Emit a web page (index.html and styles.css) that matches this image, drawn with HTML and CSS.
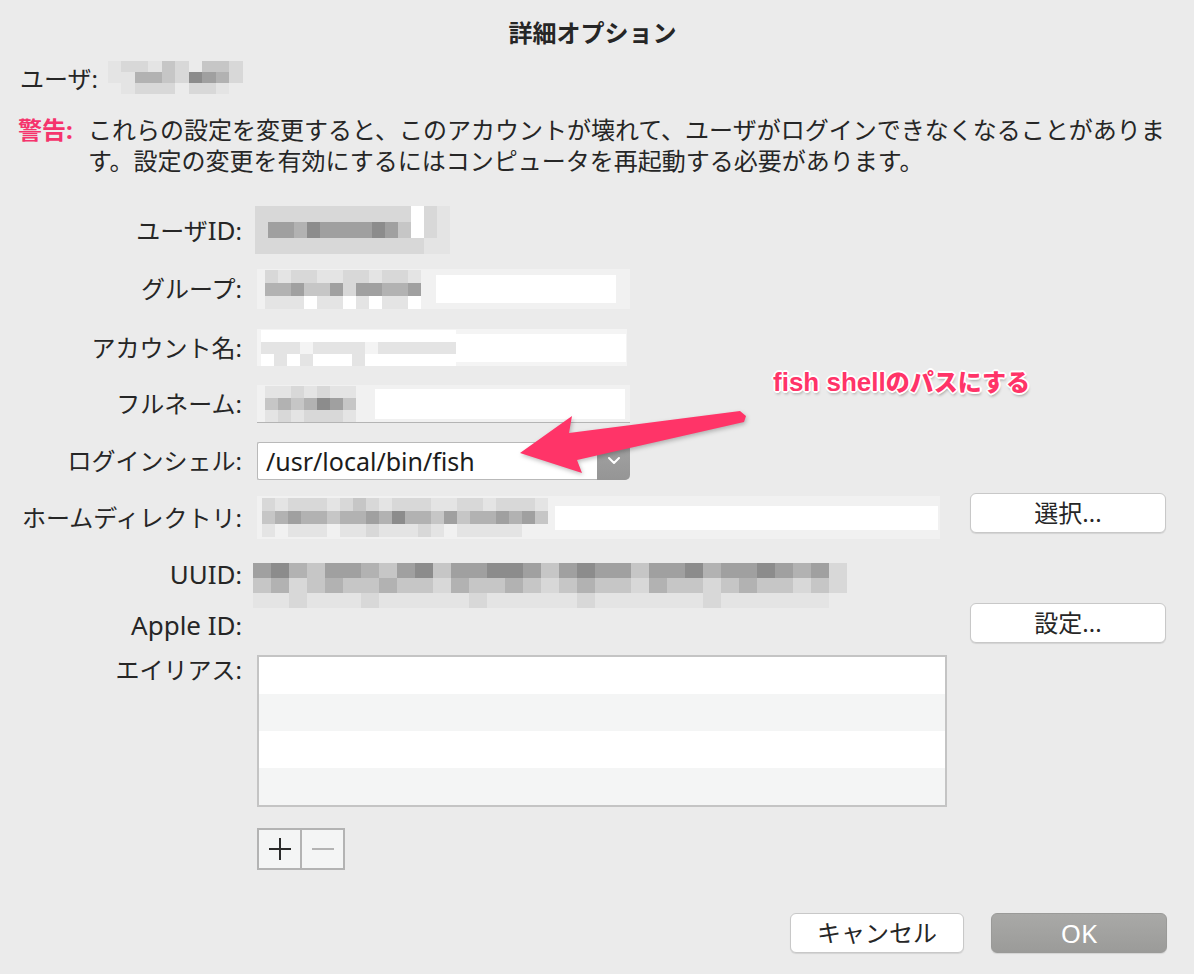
FILE: index.html
```html
<!DOCTYPE html>
<html lang="ja">
<head>
<meta charset="utf-8">
<title>詳細オプション</title>
<link rel="stylesheet" href="styles.css">
</head>
<body>
<div class="dialog">
  <h1 class="title">詳細オプション</h1>

  <div class="user-row">
    <span class="user-label">ユーザ:</span>
    <div class="mosaic m-user">
      <i class="l0"></i><i class="l1"></i><i class="l1"></i><i class="l0"></i><i class="l2"></i><i class="l1"></i><i class="e"></i><i class="l2"></i><i class="l2"></i><i class="l1"></i>
      <i class="l0"></i><i class="l0"></i><i class="g2"></i><i class="g2"></i><i class="l2"></i><i class="l1"></i><i class="g4"></i><i class="g3"></i><i class="g2"></i><i class="l1"></i>
      <i class="e"></i><i class="l0"></i><i class="l1"></i><i class="l1"></i><i class="l1"></i><i class="e"></i><i class="l1"></i><i class="l1"></i><i class="l0"></i><i class="e"></i>
    </div>
  </div>

  <div class="warning">
    <span class="warn-label">警告:</span>
    <p class="warn-text">これらの設定を変更すると、このアカウントが壊れて、ユーザがログインできなくなることがありま<br>す。設定の変更を有効にするにはコンピュータを再起動する必要があります。</p>
  </div>

  <div class="form">
    <div class="lbl">ユーザ<span class="en">ID</span>:</div>
    <div class="fld">
      <div class="mosaic m-uid">
        <i class="l1"></i><i class="l1"></i><i class="l1"></i><i class="l1"></i><i class="l1"></i><i class="l1"></i><i class="l1"></i><i class="l1"></i><i class="l1"></i><i class="l1"></i><i class="l1"></i><i class="l1"></i><i class="w"></i><i class="l1"></i><i class="l0"></i>
        <i class="l1"></i><i class="g3"></i><i class="g3"></i><i class="g2"></i><i class="g4"></i><i class="g3"></i><i class="g3"></i><i class="g3"></i><i class="g3"></i><i class="g4"></i><i class="g3"></i><i class="l2"></i><i class="w"></i><i class="l1"></i><i class="l0"></i>
        <i class="l1"></i><i class="l1"></i><i class="l1"></i><i class="l1"></i><i class="l1"></i><i class="l1"></i><i class="l1"></i><i class="l1"></i><i class="l1"></i><i class="l1"></i><i class="l1"></i><i class="l1"></i><i class="l1"></i><i class="l0"></i><i class="l0"></i>
      </div>
    </div>

    <div class="lbl">グループ:</div>
    <div class="fld">
      <div class="bf f-group">
        <div class="mosaic m-group">
          <i class="l1"></i><i class="l0"></i><i class="l1"></i><i class="l1"></i><i class="l0"></i><i class="l0"></i><i class="l1"></i><i class="l1"></i><i class="l0"></i><i class="l1"></i><i class="l1"></i><i class="l0"></i>
          <i class="g2"></i><i class="g2"></i><i class="g3"></i><i class="l2"></i><i class="l2"></i><i class="g3"></i><i class="l1"></i><i class="g3"></i><i class="g3"></i><i class="g2"></i><i class="g2"></i><i class="g3"></i>
          <i class="l0"></i><i class="l0"></i><i class="l0"></i><i class="w"></i><i class="l0"></i><i class="l0"></i><i class="w"></i><i class="l0"></i><i class="w"></i><i class="l0"></i><i class="l0"></i><i class="w"></i>
        </div>
        <div class="fill fill-group"></div>
      </div>
    </div>

    <div class="lbl">アカウント名:</div>
    <div class="fld">
      <div class="bf f-acct">
        <div class="mosaic m-acct">
          <i class="w"></i><i class="w"></i><i class="w"></i><i class="w"></i><i class="w"></i><i class="w"></i><i class="w"></i><i class="w"></i><i class="w"></i><i class="w"></i><i class="w"></i><i class="w"></i><i class="w"></i><i class="w"></i><i class="w"></i>
          <i class="l0"></i><i class="l0"></i><i class="l0"></i><i class="e"></i><i class="l0"></i><i class="l0"></i><i class="l0"></i><i class="l0"></i><i class="e"></i><i class="l0"></i><i class="l0"></i><i class="l0"></i><i class="l0"></i><i class="l0"></i><i class="l0"></i>
          <i class="w"></i><i class="l0"></i><i class="w"></i><i class="l0"></i><i class="w"></i><i class="w"></i><i class="w"></i><i class="l0"></i><i class="w"></i><i class="w"></i><i class="w"></i><i class="w"></i><i class="w"></i><i class="w"></i><i class="w"></i>
        </div>
        <div class="fill fill-acct"></div>
      </div>
    </div>

    <div class="lbl">フルネーム:</div>
    <div class="fld">
      <div class="bf f-full">
        <div class="mosaic m-full">
          <i class="l0"></i><i class="l0"></i><i class="l1"></i><i class="l0"></i><i class="l1"></i><i class="l0"></i><i class="l0"></i>
          <i class="l2"></i><i class="g2"></i><i class="l2"></i><i class="g2"></i><i class="g4"></i><i class="g3"></i><i class="l2"></i>
          <i class="l0"></i><i class="l1"></i><i class="l0"></i><i class="l1"></i><i class="l1"></i><i class="l1"></i><i class="l0"></i>
        </div>
        <div class="fill fill-full"></div>
      </div>
    </div>

    <div class="lbl">ログインシェル:</div>
    <div class="fld">
      <div class="popup">
        <span class="popup-value">/usr/local/bin/fish</span>
        <span class="popup-arrow">
          <svg width="12" height="8" viewBox="0 0 12 8"><polyline points="1,1 6,6 11,1" fill="none" stroke="#fff" stroke-width="2" stroke-linecap="round" stroke-linejoin="round"/></svg>
        </span>
      </div>
    </div>

    <div class="lbl">ホームディレクトリ:</div>
    <div class="fld">
      <div class="bf f-home">
        <div class="mosaic m-home">
          <i class="l1"></i><i class="l0"></i><i class="l1"></i><i class="l1"></i><i class="l1"></i><i class="l0"></i><i class="l1"></i><i class="l2"></i><i class="l1"></i><i class="l0"></i><i class="l1"></i><i class="l1"></i><i class="l1"></i><i class="l0"></i><i class="l0"></i><i class="l1"></i><i class="l1"></i><i class="l0"></i><i class="l1"></i><i class="l1"></i><i class="l1"></i><i class="l0"></i>
          <i class="l2"></i><i class="g2"></i><i class="g3"></i><i class="g2"></i><i class="g2"></i><i class="l2"></i><i class="g2"></i><i class="g2"></i><i class="g3"></i><i class="g2"></i><i class="g4"></i><i class="g2"></i><i class="g2"></i><i class="l2"></i><i class="g3"></i><i class="l2"></i><i class="g2"></i><i class="g2"></i><i class="g3"></i><i class="g2"></i><i class="g3"></i><i class="l2"></i>
          <i class="l0"></i><i class="e"></i><i class="l0"></i><i class="l0"></i><i class="l0"></i><i class="e"></i><i class="l0"></i><i class="l0"></i><i class="l1"></i><i class="l0"></i><i class="l0"></i><i class="l0"></i><i class="l1"></i><i class="l0"></i><i class="e"></i><i class="l0"></i><i class="l0"></i><i class="l0"></i><i class="l0"></i><i class="l0"></i><i class="e"></i><i class="e"></i>
        </div>
        <div class="fill fill-home"></div>
      </div>
    </div>
    <button class="btn side-btn btn-home">選択...</button>

    <div class="lbl"><span class="en">UUID</span>:</div>
    <div class="fld fld-uuid">
      <div class="mosaic m-uuid">
        <i class="g3"></i><i class="g4"></i><i class="g2"></i><i class="l2"></i><i class="g3"></i><i class="g3"></i><i class="g2"></i><i class="l2"></i><i class="g3"></i><i class="g4"></i><i class="l2"></i><i class="g3"></i><i class="g3"></i><i class="g4"></i><i class="g4"></i><i class="g3"></i><i class="l2"></i><i class="g3"></i><i class="g4"></i><i class="g3"></i><i class="g3"></i><i class="l2"></i><i class="g3"></i><i class="g3"></i><i class="g4"></i><i class="g2"></i><i class="g3"></i><i class="g3"></i><i class="g4"></i><i class="g3"></i><i class="g2"></i><i class="g3"></i><i class="l1"></i>
        <i class="l2"></i><i class="g2"></i><i class="l1"></i><i class="l2"></i><i class="g2"></i><i class="l2"></i><i class="l2"></i><i class="g2"></i><i class="l2"></i><i class="l2"></i><i class="l1"></i><i class="g2"></i><i class="l2"></i><i class="l2"></i><i class="g2"></i><i class="l2"></i><i class="l1"></i><i class="l2"></i><i class="g2"></i><i class="l2"></i><i class="l2"></i><i class="l1"></i><i class="g2"></i><i class="l2"></i><i class="l2"></i><i class="l1"></i><i class="l2"></i><i class="g2"></i><i class="l2"></i><i class="l2"></i><i class="l1"></i><i class="l2"></i><i class="l1"></i>
        <i class="l0"></i><i class="l0"></i><i class="l1"></i><i class="l0"></i><i class="l0"></i><i class="l0"></i><i class="l1"></i><i class="l0"></i><i class="l0"></i><i class="l0"></i><i class="l0"></i><i class="l0"></i><i class="l1"></i><i class="l0"></i><i class="l0"></i><i class="l0"></i><i class="l0"></i><i class="l0"></i><i class="l1"></i><i class="l0"></i><i class="l0"></i><i class="l0"></i><i class="l0"></i><i class="l0"></i><i class="l0"></i><i class="l1"></i><i class="l0"></i><i class="l0"></i><i class="l0"></i><i class="l0"></i><i class="l0"></i><i class="l0"></i><i class="e"></i>
      </div>
    </div>

    <div class="lbl"><span class="en">Apple ID</span>:</div>
    <button class="btn side-btn btn-apple">設定...</button>

    <div class="lbl lbl-top">エイリアス:</div>
    <div class="fld fld-top">
      <div class="alias-list">
        <div class="alias-row"></div>
        <div class="alias-row alt"></div>
        <div class="alias-row"></div>
        <div class="alias-row alt"></div>
      </div>
    </div>

    <div class="fld fld-top">
      <div class="seg">
        <span class="seg-btn">
          <svg width="22" height="22" viewBox="0 0 22 22"><path d="M11 0V22M0 11H22" stroke="#2a2a2a" stroke-width="2"/></svg>
        </span>
        <span class="seg-btn">
          <svg width="22" height="22" viewBox="0 0 22 22"><path d="M0 11H22" stroke="#b4b4b4" stroke-width="2"/></svg>
        </span>
      </div>
    </div>
  </div>

  <div class="actions">
    <button class="btn btn-cancel">キャンセル</button>
    <button class="btn btn-ok"><span class="en">OK</span></button>
  </div>

  <svg class="annot-arrow" width="1194" height="974" viewBox="0 0 1194 974">
    <polygon points="520,453 572,416 569,433 740,411 746,416 744,422 577,460 582,473" fill="#ff3468"/>
  </svg>
  <div class="annot-label"><span class="annot-en">fish shell</span>のパスにする</div>
</div>
</body>
</html>
```

FILE: styles.css
```css
* { box-sizing: border-box; }

body {
  margin: 0;
  background: #ebebeb;
  font-family: "Noto Sans", "Noto Sans CJK JP", sans-serif;
  font-size: 24px;
  color: #262626;
}

.dialog {
  position: relative;
  width: 1194px;
  height: 974px;
  padding: 17px 27px 0 18px;
}

.title {
  margin: 0;
  text-align: center;
  font-size: 24px;
  font-weight: 700;
  line-height: 32px;
}

.en { font-size: 26px; }

/* user row */
.user-row {
  display: flex;
  align-items: center;
  gap: 10px;
  height: 32px;
  margin-top: 12px;
  padding-left: 2px;
}

/* warning */
.warning {
  display: flex;
  margin-top: 21px;
  line-height: 31px;
}
.warn-label {
  flex: none;
  width: 70px;
  color: #f5336c;
  font-weight: 700;
}
.warn-text { margin: 0; white-space: nowrap; }

/* mosaic (blurred content) */
.mosaic {
  display: grid;
  grid-template-columns: repeat(var(--cols), var(--cw));
  grid-auto-rows: var(--rh);
  flex: none;
}
.mosaic i { display: block; }
.mosaic .w { background: #ffffff; }
.mosaic .e { background: transparent; }
.mosaic .l0 { background: #e4e4e4; }
.mosaic .l1 { background: #d8d8d8; }
.mosaic .l2 { background: #c6c6c6; }
.mosaic .g2 { background: #b2b2b2; }
.mosaic .g3 { background: #a0a0a0; }
.mosaic .g4 { background: #8c8c8c; }

.m-user { --cols: 10; --cw: 13.5px; --rh: 11px; }
.m-uid { --cols: 15; --cw: 13px; --rh: 16px; margin-left: -2px; }
.m-group { --cols: 12; --cw: 13px; --rh: 13px; }
.m-acct { --cols: 15; --cw: 13px; --rh: 12px; }
.m-full { --cols: 7; --cw: 13px; --rh: 12px; }
.m-home { --cols: 22; --cw: 13px; --rh: 13px; }
.m-uuid { --cols: 33; --cw: 18px; --rh: 15px; margin-left: -4px; }

/* form grid */
.form {
  display: grid;
  grid-template-columns: 224px 698px 196px;
  grid-template-rows: 58px 60px 57px 56px 57px 57px 56px 46px auto auto;
  column-gap: 15px;
  margin-top: 25px;
}
.lbl {
  grid-column: 1;
  align-self: center;
  text-align: right;
  line-height: 30px;
  white-space: nowrap;
}
.lbl-top { align-self: start; margin-top: 7px; }

.fld {
  grid-column: 2;
  align-self: center;
  display: flex;
}
.fld-top { align-self: start; }
.fld-uuid { align-self: start; margin-top: 17px; }

/* blurred text fields */
.bf {
  display: flex;
  align-items: center;
  background: #f1f1f1;
}
.fill { background: #ffffff; flex: none; }

.f-group { width: 373px; height: 40px; padding-left: 8px; }
.fill-group { width: 180px; height: 28px; margin-left: 15px; }

.f-acct { width: 370px; height: 37px; padding-left: 4px; background: #f4f4f4; }
.fill-acct { width: 170px; height: 28px; }

.f-full { width: 373px; height: 38px; padding-left: 8px; border-bottom: 1px solid #b4b4b4; }
.fill-full { width: 250px; height: 30px; margin-left: 19px; }

.f-home { width: 683px; height: 43px; padding-left: 5px; }
.fill-home { width: 383px; height: 24px; margin-left: 7px; }

/* popup */
.popup {
  display: flex;
  width: 373px;
  height: 38px;
  background: #ffffff;
  border: 1px solid #b9b9b9;
  border-right: none;
  border-radius: 2px 5px 5px 2px;
}
.popup-value {
  flex: 1;
  padding-left: 8px;
  font-size: 25px;
  line-height: 36px;
  color: #1c1c1c;
}
.popup-arrow {
  width: 33px;
  margin: -1px 0;
  display: flex;
  align-items: center;
  justify-content: center;
  background: linear-gradient(#a3a3a3, #959595);
  border-radius: 0 5px 5px 0;
}

/* buttons */
.btn {
  height: 40px;
  padding: 0;
  background: #ffffff;
  border: 1px solid #c8c8c8;
  border-radius: 6px;
  box-shadow: 0 1px 1px rgba(0, 0, 0, 0.1);
  font-family: inherit;
  font-size: 24px;
  line-height: 38px;
  color: #262626;
  text-align: center;
}
.side-btn { grid-column: 3; width: 196px; align-self: start; }
.btn-home { margin-top: 4px; }
.btn-apple { margin-top: 1px; }

.actions {
  display: flex;
  justify-content: flex-end;
  gap: 27px;
  margin-top: 43px;
}
.btn-cancel { width: 174px; }
.btn-ok {
  width: 176px;
  background: linear-gradient(#a9a9a7, #9b9b99);
  border-color: #9a9a98;
  color: #ffffff;
}

/* alias list */
.alias-list {
  width: 690px;
  height: 152px;
  margin-top: 7px;
  border: 2px solid #c4c4c4;
  display: flex;
  flex-direction: column;
  background: #f4f5f5;
}
.alias-row { height: 37px; background: #ffffff; }
.alias-row.alt { background: #f4f5f5; }

/* + / - */
.seg {
  display: flex;
  width: 88px;
  height: 42px;
  margin-top: 21px;
  border: 2px solid #b3b3b3;
  background: #f4f5f5;
}
.seg-btn {
  flex: 1;
  display: flex;
  align-items: center;
  justify-content: center;
}
.seg-btn + .seg-btn { border-left: 2px solid #b3b3b3; }

/* annotation overlay */
.annot-arrow {
  position: absolute;
  left: 0;
  top: 0;
  pointer-events: none;
  filter: drop-shadow(1px 2px 2px rgba(0, 0, 0, 0.25));
}
.annot-label {
  position: absolute;
  left: 773px;
  top: 366px;
  color: #ff3468;
  font-weight: 900;
  font-size: 24px;
  line-height: 32px;
  white-space: nowrap;
  text-shadow:
    -1px -1px 0 #fff, 1px -1px 0 #fff, -1px 1px 0 #fff, 1px 1px 0 #fff,
    0 -2px 0 #fff, 0 2px 0 #fff, -2px 0 0 #fff, 2px 0 0 #fff,
    1px 3px 3px rgba(0, 0, 0, 0.3);
}
.annot-en {
  font-family: "Liberation Sans", sans-serif;
  font-size: 26px;
}
```
